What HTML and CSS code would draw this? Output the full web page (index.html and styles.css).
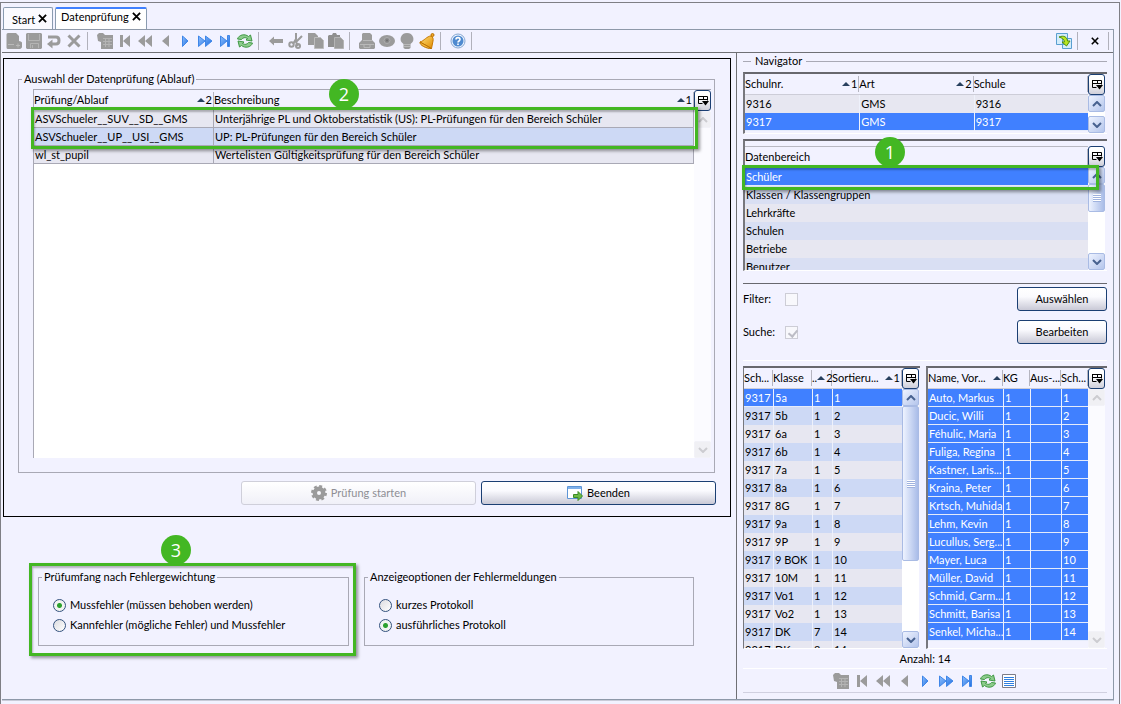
FILE: index.html
```html
<!DOCTYPE html>
<html lang="de">
<head>
<meta charset="utf-8">
<title>Datenprüfung</title>
<link rel="stylesheet" href="styles.css">
</head>
<body>
<svg class="defs" aria-hidden="true">
  <defs>
    <linearGradient id="gBlue" x1="0" y1="0" x2="1" y2="1"><stop offset="0" stop-color="#8fc0ff"/><stop offset="1" stop-color="#1f6fe0"/></linearGradient>
    <linearGradient id="gGold" x1="0" y1="0" x2="1" y2="1"><stop offset="0" stop-color="#ffe07a"/><stop offset="1" stop-color="#e08a00"/></linearGradient>
    <symbol id="new" viewBox="0 0 16 16"><path fill="#9b9b9b" d="M2 0h8l3 3v5a3.500 3.500 0 0 1-1 8H2a1.500 1.500 0 0 1-1.500-1.500V1.500A1.500 1.500 0 0 1 2 0z"/><circle cx="12" cy="12.500" r="3.500" fill="#9b9b9b"/><path stroke="#b9b9b9" fill="none" d="M2 11.500h6M12 10.500v4M10 12.500h4"/></symbol>
    <symbol id="save" viewBox="0 0 16 16"><path fill="#9b9b9b" d="M1 0h14l1 1v14l-1 1H1l-1-1V1z"/><path fill="none" stroke="#b4b4b4" d="M2.500 1v6.500h11V1M4.500 15v-4.500h8V15M6.500 12v3"/></symbol>
    <symbol id="undo" viewBox="0 0 16 16"><path fill="none" stroke="#9b9b9b" stroke-width="3" d="M2 4h8c4 0 4 7 0 7H5"/><path fill="#9b9b9b" d="M6.500 6.500v9L1 11z"/></symbol>
    <symbol id="del" viewBox="0 0 16 16"><path stroke="#9b9b9b" stroke-width="3" d="M2.500 2.500l11 11M13.500 2.500l-11 11"/></symbol>
    <symbol id="dbtab" viewBox="0 0 16 16"><path fill="#9b9b9b" d="M0 2l2-2h4l2 2h8v14H4V9L1 8z"/><path fill="none" stroke="#b4b4b4" d="M6 5.500h9M6 8.500h9M6 11.500h9M8.500 5v9M12 5v9"/></symbol>
    <symbol id="first" viewBox="0 0 16 16"><path fill="#9b9b9b" d="M3 2h3v12H3zM13 2v12L6 8z"/></symbol>
    <symbol id="rew" viewBox="0 0 16 16"><path fill="#9b9b9b" d="M8 2v12L1 8zM15 2v12L8 8z"/></symbol>
    <symbol id="prev" viewBox="0 0 16 16"><path fill="#9b9b9b" d="M12 2v12L5 8z"/></symbol>
    <symbol id="next" viewBox="0 0 16 16"><path fill="url(#gBlue)" stroke="#3f86e8" d="M5.500 3v10.500L11 8z"/></symbol>
    <symbol id="ff" viewBox="0 0 16 16"><path fill="url(#gBlue)" stroke="#3f86e8" d="M1.500 3v10.500L8 8zM8.500 3v10.500L15 8z"/></symbol>
    <symbol id="last" viewBox="0 0 16 16"><path fill="url(#gBlue)" stroke="#3f86e8" d="M3.500 3v10.500L10 8zM10.500 2.500h2v11h-2z"/></symbol>
    <symbol id="refresh" viewBox="0 0 16 16"><g fill="#8ccc8c" stroke="#3f9844" stroke-linejoin="round"><path d="M.5 6C2 1.500 8 .5 11.500 3.500L13.500 2l1.500 6-6-1 1.500-1.500C8 4 6 4.500 4.500 6.500z"/><path d="M15.500 10C14 14.500 8 15.500 4.500 12.500L2.500 14 1 8l6 1-1.500 1.500c2.500 1.500 4.500 1 6-1z"/></g></symbol>
    <symbol id="left" viewBox="0 0 16 16"><path fill="#9b9b9b" d="M6 3.500V6h9v4H6v2.500L1 8z"/></symbol>
    <symbol id="cut" viewBox="0 0 16 16"><g fill="none" stroke="#9b9b9b" stroke-width="2"><path d="M8 0v6l-3 5M14 3L8 9l2 4"/><circle cx="3.500" cy="11.500" r="2.200"/><circle cx="10" cy="13" r="2"/></g></symbol>
    <symbol id="copy" viewBox="0 0 16 16"><path fill="#9b9b9b" d="M0 0h7l3 3v9H0z"/><path fill="#9b9b9b" stroke="#bdbdbd" d="M6.500 4.500h6l3 3v8h-9z"/></symbol>
    <symbol id="paste" viewBox="0 0 16 16"><path fill="#8f8f8f" d="M1 2h3l1-2h3l1 2h3v12H0V3z"/><path fill="#9b9b9b" stroke="#b4b4b4" d="M6.500 4.500h6l3 3v8h-9z"/></symbol>
    <symbol id="print" viewBox="0 0 16 16"><path fill="#9b9b9b" d="M4 0h7l2 2v5l3 3v5l-1 1H1l-1-1v-5l3-3V1z"/><path fill="none" stroke="#b9b9b9" d="M4 7.500h9M5 11v3.500h6V11M1 11.500h14"/></symbol>
    <symbol id="eye" viewBox="0 0 16 16"><ellipse cx="8" cy="8" rx="8" ry="6" fill="#9b9b9b"/><circle cx="8" cy="7.500" r="3" fill="#8b8b8b" stroke="#adadad"/><circle cx="8" cy="7.500" r="1" fill="#6f6f6f"/></symbol>
    <symbol id="bulb" viewBox="0 0 16 16"><path fill="#9b9b9b" d="M8 0a6.500 6 0 0 1 3.500 11v4L10 16H6l-1.500-1v-4A6.500 6 0 0 1 8 0z"/><path stroke="#b9b9b9" d="M5 11.500h6M5 13.500h6"/></symbol>
    <symbol id="bell" viewBox="0 0 16 16"><circle cx="13.500" cy="2" r="1.500" fill="#f0a526" stroke="#b87000"/><path fill="url(#gGold)" stroke="#c87800" stroke-linejoin="round" d="M12 3c2 1 2.500 3 2 5l-1.500 7.500L1 9c4-1 7-6 11-6z"/><path fill="#f6b83c" stroke="#b87000" stroke-linejoin="round" d="M1 9l11.500 6.500C8 16 0 12 1 9z"/></symbol>
    <symbol id="help" viewBox="0 0 16 16"><circle cx="8" cy="8" r="7" fill="#eef5ff" stroke="#86a7d2"/><circle cx="8" cy="8" r="5.500" fill="#4f8ad0"/><path fill="none" stroke="#fff" stroke-width="1.600" d="M6 6.500c0-2.500 4-2.500 4 0C10 8 8 8 8 9.500M8 10.500V12"/></symbol>
    <symbol id="swap" viewBox="0 0 16 16"><path fill="#d3ecfa" stroke="#5a9fd0" d="M.5.5h11v11H.5zM6.500 5.500h9v10h-9z"/><path fill="#b9e51f" stroke="#4e8d10" d="M3 4c5-2 8 0 8.500 4H14l-3.500 5L6 9h2.500C8 6 6 5 3 4z"/></symbol>
    <symbol id="list" viewBox="0 0 16 16"><path fill="#fff" stroke="#7c7c88" d="M1.500 1.500h13v13h-13z"/><path stroke="#2f7fe0" d="M3 4.500h10M3 6.500h10M3 8.500h10M3 10.500h10M3 12.500h10"/></symbol>
    <symbol id="gear" viewBox="0 0 16 16"><circle cx="8" cy="8" r="4.200" fill="none" stroke="#9b9b9b" stroke-width="4.400"/><circle cx="8" cy="8" r="6.700" fill="none" stroke="#9b9b9b" stroke-width="2.600" stroke-dasharray="2.900 2.360"/></symbol>
    <symbol id="exit" viewBox="0 0 16 16"><path fill="#fff" stroke="#5d95d6" d="M.5 1.500h14v12H.5z"/><path fill="#7fb0ea" d="M1 2h13v2H1z"/><path fill="#6dbb45" stroke="#3d8a24" d="M6.500 9.500H11V6.500l4.500 4.500-4.500 4.500v-3H6.500z"/></symbol>
    <symbol id="colctl" viewBox="0 0 12 12"><path fill="none" stroke="#000" d="M1.500 1.500h9v4M1.500 1v7.500h4M1.500 4.500h9M6.500 1.500v3"/><path d="M5 6h7L8.500 10.500z"/></symbol>
    <symbol id="x" viewBox="0 0 10 10"><path stroke="#000" stroke-width="2" d="M1 1l8 8M9 1L1 9"/></symbol>
    <symbol id="sort" viewBox="0 0 8 4"><path fill="#28405e" d="M4 0l4 4H0z"/></symbol>
    <symbol id="up" viewBox="0 0 10 6"><path fill="none" stroke="currentColor" stroke-width="2" d="M1 5l4-4 4 4"/></symbol>
    <symbol id="down" viewBox="0 0 10 6"><path fill="none" stroke="currentColor" stroke-width="2" d="M1 1l4 4 4-4"/></symbol>
  </defs>
</svg>

<div class="window">
  <nav class="tabs">
    <button class="tab">Start <svg class="tab-x"><use href="#x"/></svg></button>
    <button class="tab tab-active">Datenprüfung <svg class="tab-x"><use href="#x"/></svg></button>
  </nav>

  <div class="frame">
    <div class="toolbar">
      <button class="tool" aria-label="Neu" disabled><svg><use href="#new"/></svg></button>
      <button class="tool" aria-label="Speichern" disabled><svg><use href="#save"/></svg></button>
      <button class="tool" aria-label="Rückgängig" disabled><svg><use href="#undo"/></svg></button>
      <button class="tool" aria-label="Löschen" disabled><svg><use href="#del"/></svg></button>
      <span class="sep"></span>
      <button class="tool" aria-label="Tabelle" disabled><svg><use href="#dbtab"/></svg></button>
      <button class="tool" aria-label="Erster" disabled><svg><use href="#first"/></svg></button>
      <button class="tool" aria-label="Seite zurück" disabled><svg><use href="#rew"/></svg></button>
      <button class="tool" aria-label="Zurück" disabled><svg><use href="#prev"/></svg></button>
      <button class="tool" aria-label="Weiter"><svg><use href="#next"/></svg></button>
      <button class="tool" aria-label="Seite weiter"><svg><use href="#ff"/></svg></button>
      <button class="tool" aria-label="Letzter"><svg><use href="#last"/></svg></button>
      <button class="tool" aria-label="Aktualisieren"><svg><use href="#refresh"/></svg></button>
      <span class="sep"></span>
      <button class="tool" aria-label="Links" disabled><svg><use href="#left"/></svg></button>
      <button class="tool" aria-label="Ausschneiden" disabled><svg><use href="#cut"/></svg></button>
      <button class="tool" aria-label="Kopieren" disabled><svg><use href="#copy"/></svg></button>
      <button class="tool" aria-label="Einfügen" disabled><svg><use href="#paste"/></svg></button>
      <span class="sep"></span>
      <button class="tool" aria-label="Drucken" disabled><svg><use href="#print"/></svg></button>
      <button class="tool" aria-label="Vorschau" disabled><svg><use href="#eye"/></svg></button>
      <button class="tool" aria-label="Hinweis" disabled><svg><use href="#bulb"/></svg></button>
      <button class="tool" aria-label="Wiedervorlage"><svg><use href="#bell"/></svg></button>
      <span class="sep"></span>
      <button class="tool" aria-label="Hilfe"><svg><use href="#help"/></svg></button>
      <span class="sep"></span>
      <span class="grow"></span>
      <button class="tool" aria-label="Wechseln"><svg><use href="#swap"/></svg></button>
      <span class="sep"></span>
      <button class="tool" aria-label="Schließen"><svg class="close"><use href="#x"/></svg></button>
      <span class="sep sep-end"></span>
    </div>

    <div class="split">
      <main class="left">
        <section class="run-box">
          <fieldset class="group run-group">
            <legend>Auswahl der Datenprüfung (Ablauf)</legend>
            <div class="grid grid-run">
              <div class="grid-view">
                <table class="lined">
                  <colgroup><col class="c-ablauf"><col></colgroup>
                  <thead><tr>
                    <th><div class="th">Prüfung/Ablauf<span class="sort"><svg><use href="#sort"/></svg>2</span></div></th>
                    <th><div class="th">Beschreibung<span class="sort"><svg><use href="#sort"/></svg>1</span></div></th>
                  </tr></thead>
                  <tbody>
                    <tr><td>ASVSchueler__SUV__SD__GMS</td><td>Unterjährige PL und Oktoberstatistik (US): PL-Prüfungen für den Bereich Schüler</td></tr>
                    <tr class="alt"><td>ASVSchueler__UP__USI__GMS</td><td>UP: PL-Prüfungen für den Bereich Schüler</td></tr>
                    <tr><td>wl_st_pupil</td><td>Wertelisten Gültigkeitsprüfung für den Bereich Schüler</td></tr>
                  </tbody>
                </table>
              </div>
              <div class="side">
                <button class="colctl" aria-label="Spalten"><svg><use href="#colctl"/></svg></button>
                <div class="bar bar-off"><span class="arrow"><svg><use href="#up"/></svg></span><span class="track"></span><span class="arrow"><svg><use href="#down"/></svg></span></div>
              </div>
              <div class="mark mark-2"><span class="dot">2</span></div>
            </div>
          </fieldset>
          <div class="actions">
            <button class="btn" disabled><svg class="btn-icon"><use href="#gear"/></svg>Prüfung starten</button>
            <button class="btn"><svg class="btn-icon"><use href="#exit"/></svg>Beenden</button>
          </div>
        </section>

        <section class="options">
          <div class="marked">
            <fieldset class="group radios">
              <legend>Prüfumfang nach Fehlergewichtung</legend>
              <label><input type="radio" name="umfang" checked>Mussfehler (müssen behoben werden)</label>
              <label><input type="radio" name="umfang">Kannfehler (mögliche Fehler) und Mussfehler</label>
            </fieldset>
            <div class="mark mark-3"><span class="dot">3</span></div>
          </div>
          <fieldset class="group radios">
            <legend>Anzeigeoptionen der Fehlermeldungen</legend>
            <label><input type="radio" name="anzeige">kurzes Protokoll</label>
            <label><input type="radio" name="anzeige" checked>ausführliches Protokoll</label>
          </fieldset>
        </section>
      </main>

      <aside class="navigator">
        <h2 class="nav-title"><span>Navigator</span></h2>

        <div class="grid sunk grid-school">
          <div class="grid-view">
            <table class="cut">
              <thead><tr>
                <th><div class="th">Schulnr.<span class="sort"><svg><use href="#sort"/></svg>1</span></div></th>
                <th><div class="th">Art<span class="sort"><svg><use href="#sort"/></svg>2</span></div></th>
                <th><div class="th">Schule</div></th>
              </tr></thead>
              <tbody>
                <tr><td>9316</td><td>GMS</td><td>9316</td></tr>
                <tr class="sel"><td>9317</td><td>GMS</td><td>9317</td></tr>
              </tbody>
            </table>
          </div>
          <div class="side">
            <button class="colctl" aria-label="Spalten"><svg><use href="#colctl"/></svg></button>
            <div class="bar"><span class="arrow"><svg><use href="#up"/></svg></span><span class="track"></span><span class="arrow"><svg><use href="#down"/></svg></span></div>
          </div>
        </div>

        <div class="grid sunk grid-area">
          <div class="grid-view">
            <table class="soft">
              <thead><tr><th><div class="th">Datenbereich</div></th></tr></thead>
              <tbody>
                <tr class="sel"><td>Schüler</td></tr>
                <tr class="alt"><td>Klassen / Klassengruppen</td></tr>
                <tr><td>Lehrkräfte</td></tr>
                <tr class="alt"><td>Schulen</td></tr>
                <tr><td>Betriebe</td></tr>
                <tr class="alt"><td>Benutzer</td></tr>
              </tbody>
            </table>
          </div>
          <div class="side">
            <button class="colctl" aria-label="Spalten"><svg><use href="#colctl"/></svg></button>
            <div class="bar"><span class="arrow"><svg><use href="#up"/></svg></span><span class="track"><span class="thumb thumb-short"></span></span><span class="arrow"><svg><use href="#down"/></svg></span></div>
          </div>
          <div class="mark mark-1"><span class="dot">1</span></div>
        </div>

        <div class="search">
          <label for="filter">Filter:</label><input type="checkbox" id="filter" disabled><button class="btn">Auswählen</button>
          <label for="suche">Suche:</label><input type="checkbox" id="suche" checked disabled><button class="btn">Bearbeiten</button>
        </div>

        <div class="lists">
          <div class="grid sunk grid-list grid-class">
            <div class="grid-view">
              <table class="cut">
                <colgroup><col class="c-sch"><col class="c-klasse"><col class="c-jg"><col></colgroup>
                <thead><tr>
                  <th><div class="th">Sch...</div></th><th><div class="th">Klasse</div></th>
                  <th><div class="th">..<span class="sort"><svg><use href="#sort"/></svg>2</span></div></th>
                  <th><div class="th">Sortieru...<span class="sort"><svg><use href="#sort"/></svg>1</span></div></th>
                </tr></thead>
                <tbody>
                  <tr class="sel"><td>9317</td><td>5a</td><td>1</td><td>1</td></tr>
                  <tr class="alt"><td>9317</td><td>5b</td><td>1</td><td>2</td></tr>
                  <tr><td>9317</td><td>6a</td><td>1</td><td>3</td></tr>
                  <tr class="alt"><td>9317</td><td>6b</td><td>1</td><td>4</td></tr>
                  <tr><td>9317</td><td>7a</td><td>1</td><td>5</td></tr>
                  <tr class="alt"><td>9317</td><td>8a</td><td>1</td><td>6</td></tr>
                  <tr><td>9317</td><td>8G</td><td>1</td><td>7</td></tr>
                  <tr class="alt"><td>9317</td><td>9a</td><td>1</td><td>8</td></tr>
                  <tr><td>9317</td><td>9P</td><td>1</td><td>9</td></tr>
                  <tr class="alt"><td>9317</td><td>9 BOK</td><td>1</td><td>10</td></tr>
                  <tr><td>9317</td><td>10M</td><td>1</td><td>11</td></tr>
                  <tr class="alt"><td>9317</td><td>Vo1</td><td>1</td><td>12</td></tr>
                  <tr><td>9317</td><td>Vo2</td><td>1</td><td>13</td></tr>
                  <tr class="alt"><td>9317</td><td>DK</td><td>7</td><td>14</td></tr>
                  <tr><td>9317</td><td>DK</td><td>8</td><td>14</td></tr>
                </tbody>
              </table>
            </div>
            <div class="side">
              <button class="colctl" aria-label="Spalten"><svg><use href="#colctl"/></svg></button>
              <div class="bar"><span class="arrow"><svg><use href="#up"/></svg></span><span class="track"><span class="thumb thumb-long"></span></span><span class="arrow"><svg><use href="#down"/></svg></span></div>
            </div>
          </div>
          <div class="grid sunk grid-list">
            <div class="grid-view">
              <table class="cells">
                <colgroup><col><col class="c-kg"><col class="c-aus"><col class="c-nr"></colgroup>
                <thead><tr>
                  <th><div class="th">Name, Vor...<span class="sort"><svg><use href="#sort"/></svg></span></div></th>
                  <th><div class="th">KG</div></th><th><div class="th">Aus-...</div></th><th><div class="th">Sch...</div></th>
                </tr></thead>
                <tbody>
                  <tr class="sel"><td>Auto, Markus</td><td>1</td><td></td><td>1</td></tr>
                  <tr class="sel"><td>Ducic, Willi</td><td>1</td><td></td><td>2</td></tr>
                  <tr class="sel"><td>Féhulic, Maria</td><td>1</td><td></td><td>3</td></tr>
                  <tr class="sel"><td>Fuliga, Regina</td><td>1</td><td></td><td>4</td></tr>
                  <tr class="sel"><td>Kastner, Laris...</td><td>1</td><td></td><td>5</td></tr>
                  <tr class="sel"><td>Kraina, Peter</td><td>1</td><td></td><td>6</td></tr>
                  <tr class="sel"><td>Krtsch, Muhida</td><td>1</td><td></td><td>7</td></tr>
                  <tr class="sel"><td>Lehm, Kevin</td><td>1</td><td></td><td>8</td></tr>
                  <tr class="sel"><td>Lucullus, Serg...</td><td>1</td><td></td><td>9</td></tr>
                  <tr class="sel"><td>Mayer, Luca</td><td>1</td><td></td><td>10</td></tr>
                  <tr class="sel"><td>Müller, David</td><td>1</td><td></td><td>11</td></tr>
                  <tr class="sel"><td>Schmid, Carm...</td><td>1</td><td></td><td>12</td></tr>
                  <tr class="sel"><td>Schmitt, Barisa</td><td>1</td><td></td><td>13</td></tr>
                  <tr class="sel"><td>Senkel, Micha...</td><td>1</td><td></td><td>14</td></tr>
                </tbody>
              </table>
            </div>
            <div class="side">
              <button class="colctl" aria-label="Spalten"><svg><use href="#colctl"/></svg></button>
              <div class="bar bar-off"><span class="arrow"><svg><use href="#up"/></svg></span><span class="track"></span><span class="arrow"><svg><use href="#down"/></svg></span></div>
            </div>
          </div>
        </div>

        <p class="count">Anzahl: 14</p>
        <div class="pager">
          <button class="tool" aria-label="Tabelle" disabled><svg><use href="#dbtab"/></svg></button>
          <button class="tool" aria-label="Erster" disabled><svg><use href="#first"/></svg></button>
          <button class="tool" aria-label="Seite zurück" disabled><svg><use href="#rew"/></svg></button>
          <button class="tool" aria-label="Zurück" disabled><svg><use href="#prev"/></svg></button>
          <button class="tool" aria-label="Weiter"><svg><use href="#next"/></svg></button>
          <button class="tool" aria-label="Seite weiter"><svg><use href="#ff"/></svg></button>
          <button class="tool" aria-label="Letzter"><svg><use href="#last"/></svg></button>
          <button class="tool" aria-label="Aktualisieren"><svg><use href="#refresh"/></svg></button>
          <button class="tool" aria-label="Liste"><svg><use href="#list"/></svg></button>
        </div>
      </aside>
    </div>
  </div>
</div>
</body>
</html>
```

FILE: styles.css
```css
* { box-sizing: border-box; }

body {
  margin: 0;
  min-height: 100vh;
  display: flex;
  background: #f2f2ff;
  color: #000;
  font: 11px/18px Lato, "Open Sans", sans-serif;
}

button, input { font: inherit; color: inherit; margin: 0; }
button { padding: 0; white-space: nowrap; }
svg { display: block; flex: none; }
.defs { position: absolute; width: 0; height: 0; }

.window {
  flex: 1;
  display: flex;
  flex-direction: column;
  margin: 2px 1px 0 0;
  border: solid #7f7f85;
  border-width: 1px 1px 0 1px;
  padding: 4px 5px 4px 1px;
}

/* tabs */
.tabs { display: flex; gap: 2px; padding-left: 1px; height: 22px; }
.tab {
  display: flex;
  align-items: center;
  gap: 3px;
  padding: 2px 5px 0 8px;
  border: 1px solid #8a9bb0;
  border-bottom: 0;
  border-radius: 2px 2px 0 0;
  background: #fafaff;
  line-height: 16px;
}
.tab-active { border-top: 2px solid #4080ff; padding: 0 5px 4px 5px; background: #fff; }
.tab-x { width: 9px; height: 9px; margin-bottom: 2px; }

.frame {
  flex: 1;
  display: flex;
  flex-direction: column;
  border: 1px solid #8e99a9;
  border-left: 0;
  box-shadow: 0 1px 0 #c9cbd8;
}

/* toolbar */
.toolbar { display: flex; height: 23px; padding-left: 2px; border-bottom: 1px solid #6f7075; }
.tool {
  width: 20px;
  display: flex;
  align-items: center;
  justify-content: center;
  border: 0;
  background: none;
}
.tool svg { width: 16px; height: 16px; }
.tool .close { width: 8px; height: 8px; }
.sep { width: 11px; padding: 2px 0 2px 3px; }
.sep::before { content: ""; display: block; width: 1px; height: 18px; background: #b1b1bb; }
.sep-end { width: 8px; }
.grow { flex: 1; }

.split { flex: 1; display: flex; }
.left { flex: 1; display: flex; flex-direction: column; padding: 5px 5px 0 1px; min-width: 0; }

/* group boxes */
.group {
  margin: 0;
  min-width: 0;
  border: 1px solid #a9a9b5;
  padding: 0;
}
.group legend { margin-left: 3px; padding: 0 2px; line-height: 14px; }

.run-box { border: 1px solid #000; padding: 13px 14px 11px 14px; }
.run-group { margin-right: 1px; }
.actions { display: flex; justify-content: flex-end; gap: 5px; margin-top: 8px; }
.actions .btn { width: 235px; }

.btn {
  display: flex;
  align-items: center;
  justify-content: center;
  gap: 4px;
  height: 24px;
  border: 1px solid #1b3f73;
  border-radius: 3px;
  background: linear-gradient(#fff 0%, #fafafe 40%, #c9c9d6 100%);
}
.btn:disabled { border-color: #cfcfda; color: #8e8e94; background: linear-gradient(#fff, #f0f0f8); }
.btn-icon { width: 16px; height: 16px; }

/* radio groups */
.options { display: flex; gap: 15px; padding: 53px 0 0 35px; }
.marked { position: relative; width: 311px; }
.radios { height: 76px; }
.options > .radios { width: 330px; }
.radios label { display: flex; align-items: center; gap: 4px; height: 20px; padding-left: 14px; }
.radios legend + label { margin-top: 11px; }
input[type="radio"] {
  appearance: none;
  width: 13px;
  height: 13px;
  border: 1px solid #34527e;
  border-radius: 50%;
  background: linear-gradient(135deg, #dcdce0, #fff);
}
input[type="radio"]:checked { background: radial-gradient(circle, #2ba12e 0 2px, #f1f4f1 3px); }
input[type="checkbox"] {
  appearance: none;
  width: 13px;
  height: 13px;
  border: 1px solid #cdcdd6;
  background: #f8f8fc;
}
input[type="checkbox"]:checked::before {
  content: "";
  display: block;
  width: 4px;
  height: 7px;
  margin: 1px 0 0 4px;
  border: solid #bdbdc6;
  border-width: 0 2px 2px 0;
  transform: rotate(40deg);
}

/* tables */
.grid { position: relative; display: flex; background: #f2f2ff; }
.grid-view { flex: 1; min-width: 0; overflow: hidden; }
.grid-run { height: 369px; margin: 3px 3px 14px 14px; border: 1px solid #a9a9b5; border-width: 1px 0 0 1px; }
.grid-run .grid-view { background: #fff; }
.sunk { padding-right: 2px; border-top: 2px solid #68686e; border-left: 2px solid #77777d; border-bottom: 1px solid #fff; }

table { width: 100%; table-layout: fixed; border-collapse: separate; border-spacing: 0; }
th, td { padding: 0; text-align: left; font-weight: normal; white-space: nowrap; overflow: hidden; }
th { height: 20px; background: #f2f2ff; border-bottom: 1px solid #cdcdd8; }
.sunk th { height: 21px; }
.th { display: flex; align-items: center; height: 16px; border-right: 1px solid #b5b5c0; }
.sort { flex: 1; display: flex; align-items: center; justify-content: flex-end; gap: 1px; padding-right: 1px; }
.sort svg { width: 8px; height: 4px; }
td { height: 18px; padding-left: 1px; line-height: 18px; background: #e7e7f1; }
.alt td { background: #cdd9f5; }
.soft .alt td { background: #d9dff3; }
.sel td { background: #4080ff; color: #fff; box-shadow: inset 0 -1px 0 #e4ebfb; }
.lined td { border: solid #a9a9b5; border-width: 0 1px 1px 0; line-height: 17px; }
.cut td + td, .cells td + td { border-left: 1px solid #eef1fb; }
.c-ablauf { width: 180px; }
.c-sch { width: 29px; }
.c-klasse { width: 39px; }
.c-jg { width: 20px; }
.c-kg { width: 27px; }
.c-aus { width: 31px; }
.c-nr { width: 27px; }

.side { width: 17px; display: flex; flex-direction: column; }
.colctl {
  height: 21px;
  display: flex;
  align-items: center;
  justify-content: center;
  border: 1px solid #1b3f73;
  border-radius: 3px;
  background: linear-gradient(#fff 30%, #cfcfda);
}
.colctl svg { width: 12px; height: 12px; }
.bar { flex: 1; display: flex; flex-direction: column; background: #fff; }
.arrow {
  height: 17px;
  display: flex;
  align-items: center;
  justify-content: center;
  border: 1px solid #a9bbe4;
  border-radius: 2px;
  background: linear-gradient(135deg, #eef3ff, #b4c5ec);
  color: #47618f;
}
.arrow svg { width: 10px; height: 6px; }
.bar-off { background: #fbfbff; }
.bar-off .arrow { border-color: #f2f2f8; background: #f0f0f4; color: #ccccd0; }
.track { flex: 1; }
.thumb {
  display: flex;
  align-items: center;
  justify-content: center;
  border: 1px solid #a9bbe4;
  border-radius: 2px;
  background: linear-gradient(90deg, #eef3ff, #a9bce8);
}
.thumb::before {
  content: "";
  width: 8px;
  height: 8px;
  background: repeating-linear-gradient(#fff 0 1px, #9fb2de 1px 2px);
}
.thumb-short { height: 28px; }
.thumb-long { height: 155px; }

/* navigator */
.navigator {
  width: 377px;
  display: flex;
  flex-direction: column;
  border-left: 1px solid #6f7075;
  padding: 0 6px 0 6px;
}
.nav-title { display: flex; align-items: center; gap: 4px; margin: 0 0 3px; font-size: 11px; font-weight: normal; line-height: 16px; }
.nav-title::before, .nav-title::after { content: ""; height: 1px; background: #a9a9b5; width: 8px; }
.nav-title::after { flex: 1; }
.grid-school { height: 62px; }
.grid-area { height: 132px; margin-top: 5px; padding-top: 5px; }
.grid-area .grid-view { border-top: 1px solid #b9b9c2; }
.search {
  display: grid;
  grid-template-columns: 42px 1fr 90px;
  row-gap: 9px;
  align-items: center;
  margin-top: 12px;
  padding: 3px 0 16px;
  border-top: 1px solid #68686e;
  border-bottom: 1px solid #fff;
}
.lists { display: grid; grid-template-columns: 177px 1fr; gap: 6px; margin-top: 5px; }
.grid-list { height: 283px; }
.grid-class { border-left-width: 1px; padding-right: 1px; }
.count { margin: 0; line-height: 19px; text-align: center; }
.pager { display: flex; justify-content: center; height: 25px; border: solid #fff; border-width: 1px 0; border-bottom-color: #d0d0e0; }
.pager .tool { width: 21px; }

/* callouts */
.mark { position: absolute; border: 3px solid #43b723; box-shadow: 2px 2px 3px #0006, inset 1px 2px 2px #0004; }
.mark-1 { left: -3px; right: 8px; top: 24px; height: 25px; }
.mark-2 { left: -3px; right: 13px; top: 17px; height: 42px; }
.mark-3 { left: -9px; right: -7px; top: -7px; height: 93px; }
.dot {
  position: absolute;
  width: 30px;
  height: 30px;
  border-radius: 50%;
  background: #43b723;
  color: #fff;
  font: 18px/30px "Open Sans", sans-serif;
  text-align: center;
}
.mark-1 .dot { left: 130px; bottom: 20px; }
.mark-2 .dot { left: 295px; bottom: 37px; }
.mark-3 .dot { left: 129px; bottom: 88px; }
```
